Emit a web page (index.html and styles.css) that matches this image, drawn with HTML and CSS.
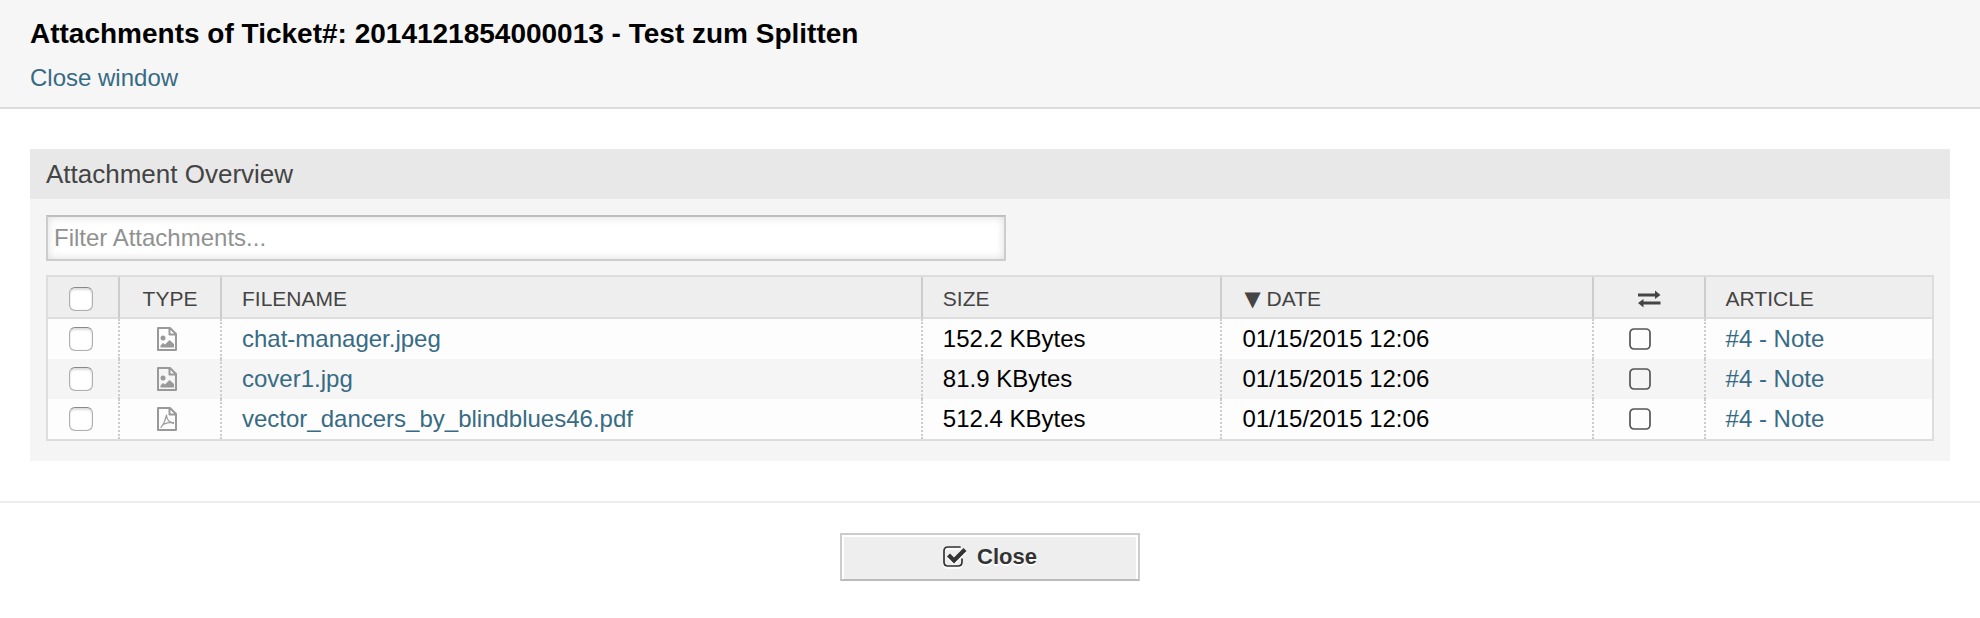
FILE: index.html
```
<!DOCTYPE html>
<html lang="en">
<head>
<meta charset="utf-8">
<title>Attachments of Ticket#: 2014121854000013 - Test zum Splitten</title>
<link rel="stylesheet" href="styles.css">
</head>
<body>
<svg class="sprite" aria-hidden="true">
  <symbol id="file-image" viewBox="0 0 20 24">
    <path d="M1 1H13L19 7V23H1Z M12.5 1V7.5H19" fill="none" stroke="currentColor" stroke-width="2" stroke-linejoin="round"/>
    <circle cx="6" cy="11" r="2.5" fill="currentColor"/>
    <path d="M3.5 20.500V18.500L6 16L8 17.500L12.500 13L17 17V20.500Z" fill="currentColor"/>
  </symbol>
  <symbol id="file-pdf" viewBox="0 0 20 24">
    <path d="M1 1H13L19 7V23H1Z M12.5 1V7.5H19" fill="none" stroke="currentColor" stroke-width="2" stroke-linejoin="round"/>
    <path d="M9.500 8C8.500 13 6 18 4 20.500M9.500 8C9.500 12 12.500 16 16.500 16.500M6 17.500C9 16 13 15 16.500 15.500" fill="none" stroke="currentColor" stroke-width="1.200" stroke-linecap="round"/>
  </symbol>
  <symbol id="square" viewBox="0 0 22 22">
    <rect x="1" y="1" width="20" height="20" rx="4" fill="none" stroke="currentColor" stroke-width="1.700"/>
  </symbol>
</svg>
<header class="page-header">
  <h1>Attachments of Ticket#: 2014121854000013 - Test zum Splitten</h1>
  <a href="#">Close window</a>
</header>
<main class="content">
  <section class="panel">
    <h2>Attachment Overview</h2>
    <div class="panel-body">
      <input class="filter" type="text" placeholder="Filter Attachments..." aria-label="Filter Attachments">
      <table class="attachments">
        <colgroup>
          <col class="col-check"><col class="col-type"><col class="col-name"><col class="col-size"><col class="col-date"><col class="col-inline"><col>
        </colgroup>
        <thead>
          <tr>
            <th class="center check"><input type="checkbox" aria-label="Select all"></th>
            <th class="center">TYPE</th>
            <th>FILENAME</th>
            <th>SIZE</th>
            <th><span class="sort">▼</span>DATE</th>
            <th class="center"><svg class="icon-exchange" viewBox="0 0 24 18" role="img" aria-label="Inline"><path d="M1 3.500H18V0.500L23.500 5L18 9V6.500H1Z M23.500 11.500H6.500V9L1 13L6.500 17.500V14.500H23.500Z" fill="currentColor"/></svg></th>
            <th>ARTICLE</th>
          </tr>
        </thead>
        <tbody>
          <tr>
            <td class="center check"><input type="checkbox" aria-label="Select chat-manager.jpeg"></td>
            <td class="center type"><svg class="icon-file"><use href="#file-image"/></svg></td>
            <td><a href="#">chat-manager.jpeg</a></td>
            <td>152.2 KBytes</td>
            <td>01/15/2015 12:06</td>
            <td class="center inline"><svg class="icon-square"><use href="#square"/></svg></td>
            <td><a href="#">#4 - Note</a></td>
          </tr>
          <tr>
            <td class="center check"><input type="checkbox" aria-label="Select cover1.jpg"></td>
            <td class="center type"><svg class="icon-file"><use href="#file-image"/></svg></td>
            <td><a href="#">cover1.jpg</a></td>
            <td>81.9 KBytes</td>
            <td>01/15/2015 12:06</td>
            <td class="center inline"><svg class="icon-square"><use href="#square"/></svg></td>
            <td><a href="#">#4 - Note</a></td>
          </tr>
          <tr>
            <td class="center check"><input type="checkbox" aria-label="Select vector_dancers_by_blindblues46.pdf"></td>
            <td class="center type"><svg class="icon-file"><use href="#file-pdf"/></svg></td>
            <td><a href="#">vector_dancers_by_blindblues46.pdf</a></td>
            <td>512.4 KBytes</td>
            <td>01/15/2015 12:06</td>
            <td class="center inline"><svg class="icon-square"><use href="#square"/></svg></td>
            <td><a href="#">#4 - Note</a></td>
          </tr>
        </tbody>
      </table>
    </div>
  </section>
</main>
<footer class="page-footer">
  <button class="close" type="button">
    <svg class="icon-check" viewBox="0 0 24 22"><path d="M17 1H5Q1 1 1 5V16Q1 20 5 20H15Q19 20 19 16V13" fill="none" stroke="currentColor" stroke-width="1.700" stroke-linecap="round"/><path d="M5.500 9L11 14.500L22 3.500" fill="none" stroke="currentColor" stroke-width="4.200"/></svg>
    Close
  </button>
</footer>
</body>
</html>
```
FILE: styles.css
```
* {
  box-sizing: border-box;
}

body {
  margin: 0;
  background: #fff;
  color: #000;
  font: 24px/32px "Liberation Sans", Arial, sans-serif;
}

a {
  color: #376b84;
  text-decoration: none;
}

.sprite {
  display: none;
}

.page-header {
  padding: 17px 30px 13px;
  border-bottom: 2px solid #ddd;
  background: #f6f6f6;
}

.page-header h1 {
  margin: 0 0 11px;
  font-size: 28px;
  line-height: 34px;
}

.content {
  padding: 40px 30px;
}

.panel {
  background: #f5f5f5;
}

.panel h2 {
  margin: 0;
  padding: 0 16px;
  background: #e8e8e8;
  color: #444;
  font-size: 26px;
  font-weight: normal;
  line-height: 50px;
}

.panel-body {
  padding: 16px 16px 20px;
}

.filter {
  display: block;
  width: 50%;
  min-width: 960px;
  height: 46px;
  margin-bottom: 14px;
  padding: 0 6px;
  border: 2px solid #ccc;
  border-top-color: #bfbfbf;
  border-radius: 0;
  background: #fff;
  box-shadow: inset 0 0 10px #ddd;
  font: inherit;
}

.filter::placeholder {
  color: #919191;
}

.attachments {
  width: 100%;
  border: 2px solid #ddd;
  border-spacing: 0;
  table-layout: fixed;
}

.col-check { width: 72px; }
.col-type { width: 102px; }
.col-name { width: 37.2%; }
.col-size { width: 15.9%; }
.col-date { width: 19.7%; }
.col-inline { width: 112px; }

th,
td {
  height: 40px;
  padding: 0 20px;
  border-right: 2px dotted #ccc;
  text-align: left;
  white-space: nowrap;
}

th {
  height: 42px;
  padding-top: 4px;
  border-right-style: solid;
  border-bottom: 2px solid #ddd;
  background: #eee;
  color: #444;
  font-size: 21px;
  font-weight: normal;
  line-height: 32px;
}

th:last-child,
td:last-child {
  border-right: 0;
}

.center {
  padding-right: 0;
  padding-left: 0;
  text-align: center;
}

.check {
  padding-right: 4px;
}

.type {
  padding-right: 6px;
}

.inline {
  padding-right: 18px;
}

tbody tr {
  background: #fdfdfd;
}

tbody tr:nth-child(even) {
  background: #f5f5f5;
}

input[type="checkbox"] {
  display: block;
  width: 24px;
  height: 24px;
  margin: 0 auto;
  border: 1px solid #b0b0b0;
  border-top-color: #888;
  border-radius: 6px;
  appearance: none;
  background: #fff;
  box-shadow: inset 0 2px 2px #ddd, inset 0 0 1px #aaa;
}

.sort {
  margin: 0 6px 0 2px;
  font-family: "DejaVu Sans", sans-serif;
  line-height: 1;
}

.icon-file,
.icon-square,
.icon-exchange {
  display: block;
  margin: 0 auto;
}

.icon-file {
  width: 20px;
  height: 24px;
  color: #999;
}

.icon-square {
  width: 22px;
  height: 22px;
  color: #555;
}

.icon-exchange {
  width: 24px;
  height: 18px;
}

.page-footer {
  display: flex;
  justify-content: center;
  padding: 30px;
  border-top: 2px solid #eee;
}

.close {
  display: flex;
  align-items: center;
  justify-content: center;
  gap: 10px;
  width: 300px;
  height: 48px;
  padding: 0;
  border: 2px solid #ccc;
  border-bottom-color: #bbb;
  background: #eee;
  box-shadow: inset 2px 2px #fff, inset -2px 0 #fff;
  color: #333;
  font: bold 22px/32px "Liberation Sans", Arial, sans-serif;
  text-shadow: 0 2px #fff;
}

.icon-check {
  width: 24px;
  height: 22px;
  filter: drop-shadow(0 2px #fff);
}
```
